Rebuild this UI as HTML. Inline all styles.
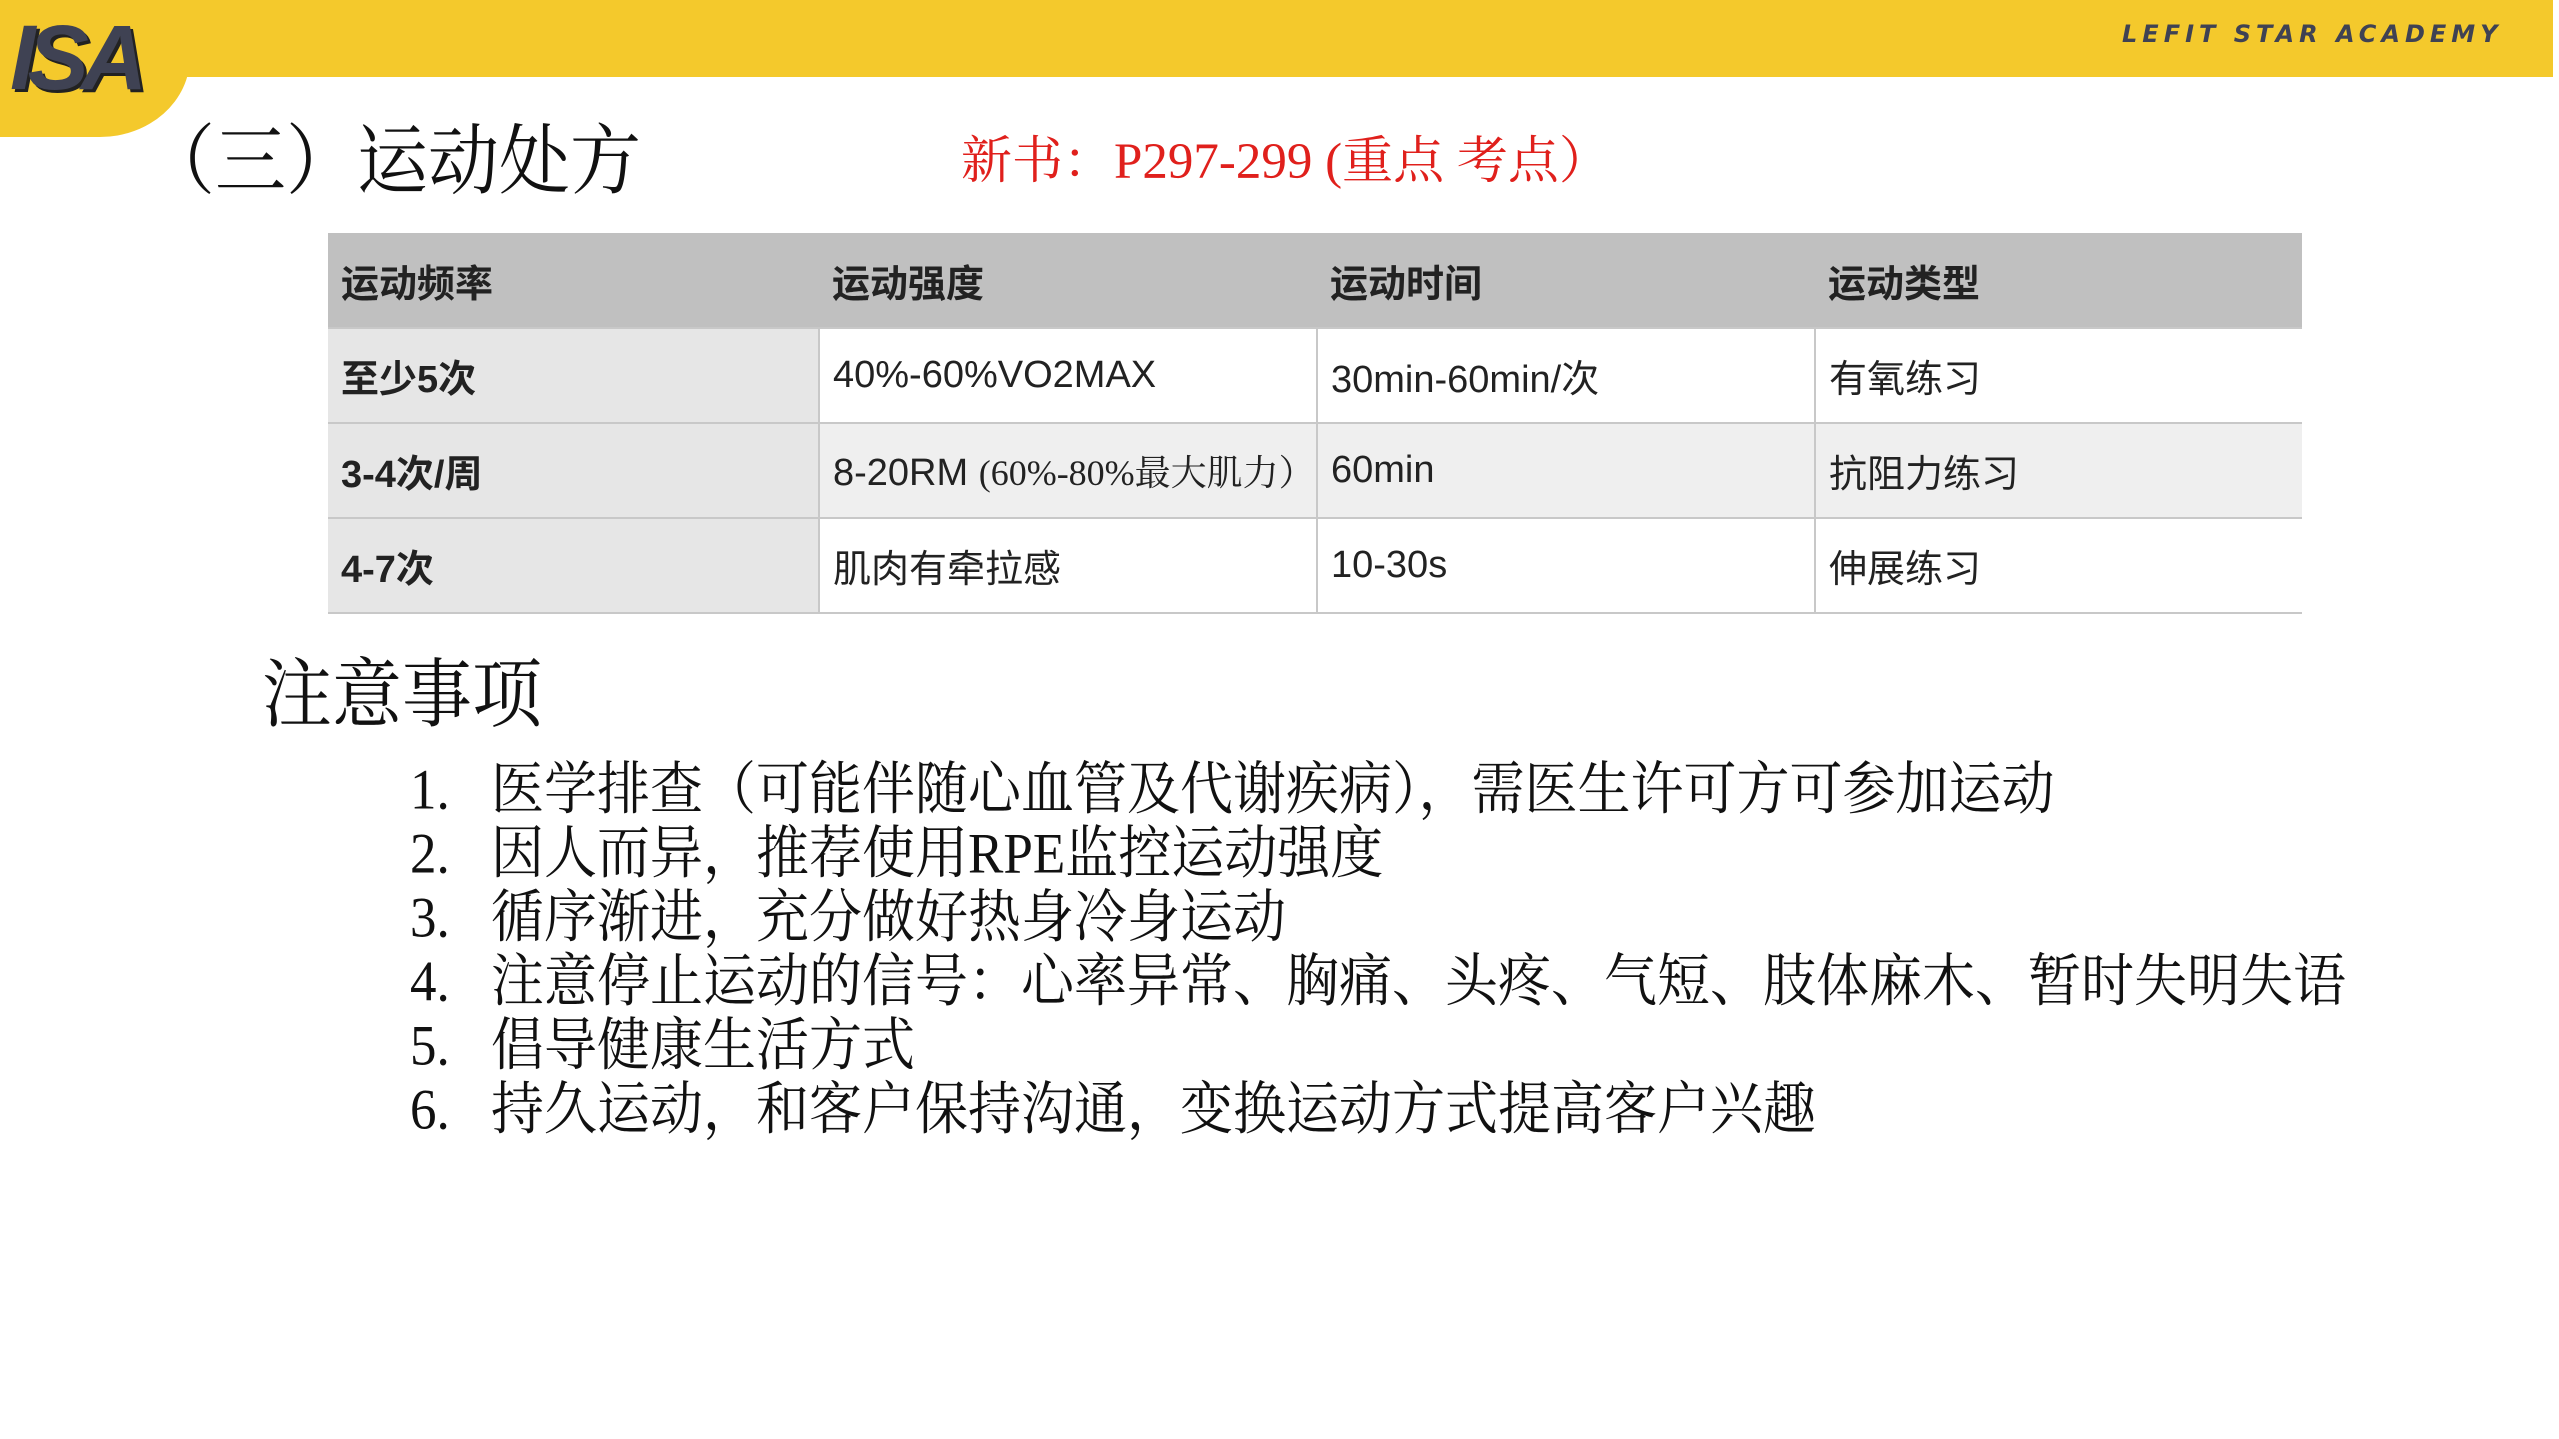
<!DOCTYPE html>
<html><head><meta charset="utf-8"><style>
*{margin:0;padding:0;box-sizing:border-box}
body{width:2559px;height:1439px;background:#fff;position:relative;overflow:hidden;font-family:"Liberation Serif","Noto Serif CJK SC",serif}
.bar{position:absolute;left:0;top:0;width:2553px;height:77px;background:#f4c92c}
.tab{position:absolute;left:0;top:0;width:190px;height:137px;background:#f4c92c;border-bottom-right-radius:90px 80px}
.logo{position:absolute;left:10px;top:6px;font:italic 900 92px "Liberation Sans",sans-serif;color:#3f4253;letter-spacing:-8px;text-shadow:3px 3px 0 #222;}
.lefit{position:absolute;left:2122px;top:20px;font:italic 700 24px "DejaVu Sans",sans-serif;color:#3f4253;letter-spacing:5px;white-space:nowrap}
.t{position:absolute;white-space:nowrap}
table{position:absolute;left:328px;top:233px;width:1974px;table-layout:fixed;border-collapse:collapse;font-family:"Liberation Sans","Noto Sans CJK SC",sans-serif;font-size:38px;color:#222}
td{height:95px;padding-left:13px;border-left:2px solid #c8c8c8;border-top:2px solid #c8c8c8;vertical-align:middle}
tr.h td{background:#c0c0c0;font-weight:700;border-left:none;border-top:none;height:95px}
td.f{background:#e6e6e6;font-weight:700;border-left:none}
tr.g td{background:#efefef}
tr.g td.f{background:#e6e6e6}
tr:last-child td{border-bottom:2px solid #c8c8c8}
.list{position:absolute;left:410px;top:758px;font-size:53px;line-height:64px;color:#111}
.list div{white-space:nowrap;transform:scaleY(1.08);transform-origin:left center}
.list span{display:inline-block;width:81px}
</style></head><body>
<div class="bar"></div><div class="tab"></div>
<div class="logo">ISA</div>
<div class="lefit">LEFIT STAR ACADEMY</div>
<div class="t" style="left:144px;top:104px;font-size:71px;color:#111;transform:scaleY(1.08)">（三）运动处方</div>
<div class="t" style="left:961px;top:119px;font-size:51px;color:#e0201c">新书：P297-299 (重点 考点）</div>
<table>
<colgroup><col style="width:491px"><col style="width:498px"><col style="width:498px"><col style="width:487px"></colgroup>
<tr class="h"><td>运动频率</td><td>运动强度</td><td>运动时间</td><td>运动类型</td></tr>
<tr><td class="f">至少5次</td><td>40%-60%VO2MAX</td><td>30min-60min/次</td><td>有氧练习</td></tr>
<tr class="g"><td class="f">3-4次/周</td><td style="white-space:nowrap;padding-right:0;overflow:visible">8-20RM <span style="font-family:'Liberation Serif','Noto Serif CJK SC',serif;font-size:36px">(60%-80%最大肌力）</span></td><td>60min</td><td>抗阻力练习</td></tr>
<tr><td class="f">4-7次</td><td>肌肉有牵拉感</td><td>10-30s</td><td>伸展练习</td></tr>
</table>
<div class="t" style="left:262px;top:638px;font-size:70px;color:#111;transform:scaleY(1.08)">注意事项</div>
<div class="list">
<div><span>1.</span>医学排查（可能伴随心血管及代谢疾病），需医生许可方可参加运动</div>
<div><span>2.</span>因人而异，推荐使用RPE监控运动强度</div>
<div><span>3.</span>循序渐进，充分做好热身冷身运动</div>
<div><span>4.</span>注意停止运动的信号：心率异常、胸痛、头疼、气短、肢体麻木、暂时失明失语</div>
<div><span>5.</span>倡导健康生活方式</div>
<div><span>6.</span>持久运动，和客户保持沟通，变换运动方式提高客户兴趣</div>
</div>
</body></html>
